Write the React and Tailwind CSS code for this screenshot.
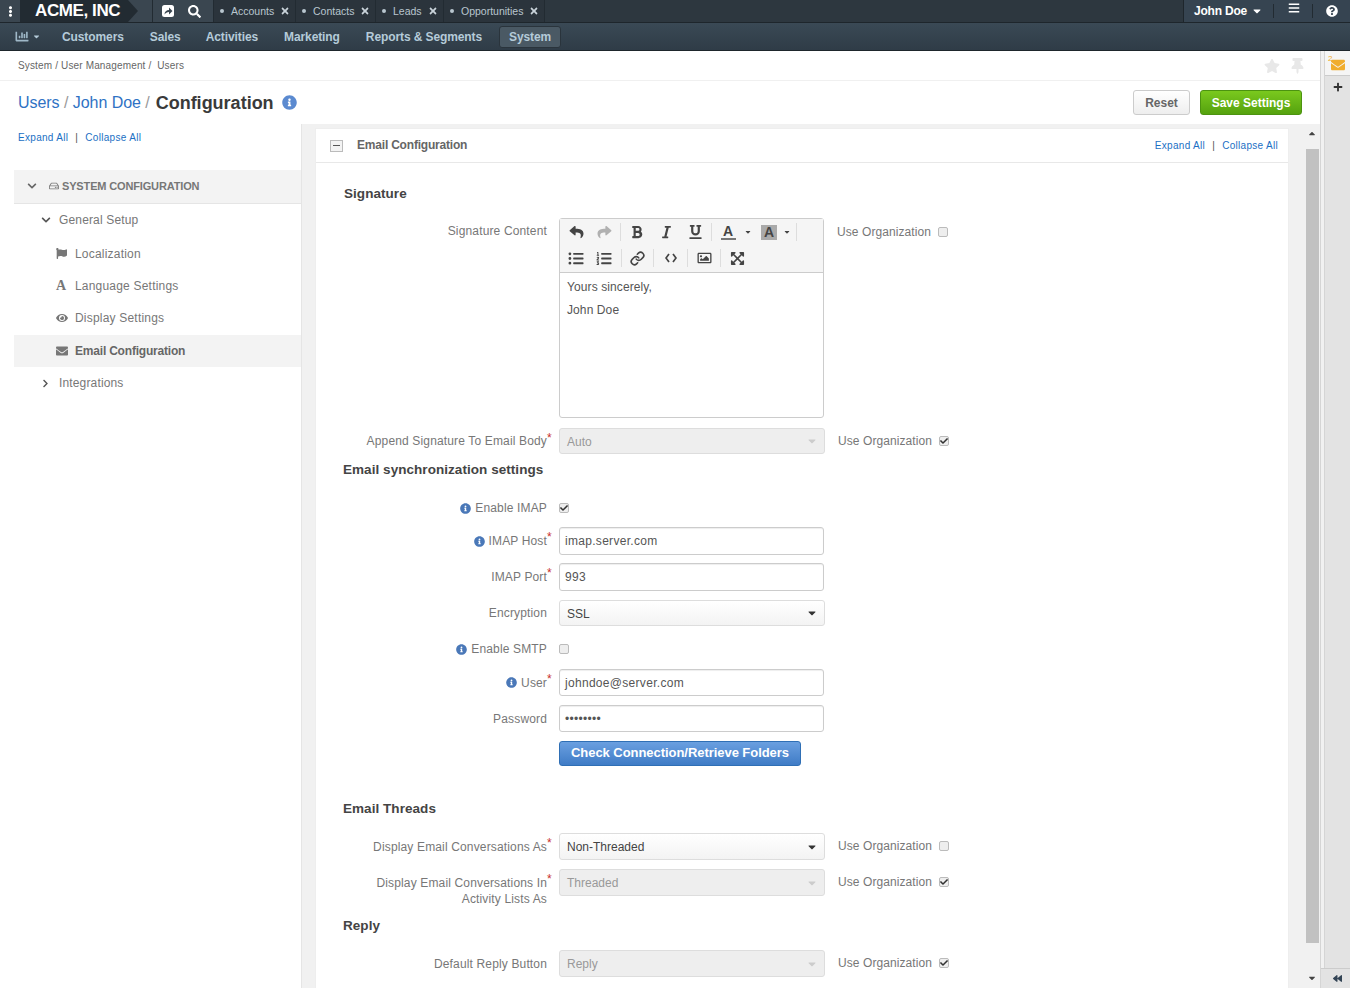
import React from 'react';
import {
  FaBackward, FaBold, FaCaretDown, FaChartBar, FaCheck, FaChevronDown, FaChevronRight, FaEllipsisV,
  FaEnvelope, FaExpandArrowsAlt, FaEye, FaFlag, FaInfoCircle, FaItalic, FaListOl,
  FaListUl, FaPlus, FaQuestionCircle, FaRegHdd, FaRegImage, FaReply, FaSearch, FaShare, FaStar, FaThumbtack,
  FaTimes, FaUnderline, FaBars,
} from 'react-icons/fa';
import { Link } from 'lucide-react';

const tabs = [
  { name: 'Accounts', w: 'w-[82px]' },
  { name: 'Contacts', w: 'w-[80px]' },
  { name: 'Leads', w: 'w-[68px]' },
  { name: 'Opportunities', w: 'w-[101px]' },
];

const menu = [
  { name: 'Customers', ml: 'ml-[21px]' },
  { name: 'Sales', ml: 'ml-[26px]' },
  { name: 'Activities', ml: 'ml-[25px]' },
  { name: 'Marketing', ml: 'ml-[26px]' },
  { name: 'Reports & Segments', ml: 'ml-[26px]' },
];

const Check = ({ checked }) => (
  <span className="w-[10px] h-[10px] shrink-0 flex items-center justify-center rounded-[2px] border border-[#bbb] bg-[#eee]">
    {checked && <FaCheck className="w-[8px] h-[8px] text-[#333]" />}
  </span>
);

const UseOrg = ({ checked, ml = 'ml-[13px]' }) => (
  <div className={`flex items-center h-[26px] ${ml} text-[#777] tracking-[0.08px]`}>
    <span>Use Organization</span>
    <span className="ml-[7px]"><Check checked={checked} /></span>
  </div>
);

const Label = ({ children, req, info, top = 'items-center' }) => (
  <div className={`w-[236px] shrink-0 flex justify-end ${top} text-[#777] tracking-[0.15px]`}>
    {info && <FaInfoCircle className="w-[11px] h-[11px] mr-[4px] text-[#4a78b8]" />}
    <span className="text-right">{children}</span>
    <span className="w-[5px] self-start text-[#c9302c] leading-[20px]">{req ? '*' : ''}</span>
  </div>
);

const Input = ({ value, h = 'h-[28px]' }) => (
  <div className={`ml-[7px] w-[265px] ${h} flex items-center px-[5px] rounded-[3px] border border-[#ccc] bg-white text-[#555] tracking-[0.3px] shadow-[inset_0_1px_1px_rgba(0,0,0,0.07)]`}>
    {value}
  </div>
);

const Select = ({ value, disabled }) => (
  <div className={`ml-[7px] w-[266px] h-full flex items-center justify-between pl-[7px] pr-[6px] rounded-[3px] border border-[#ddd] ${disabled ? 'bg-[#eee] text-[#999]' : 'bg-gradient-to-b from-white to-[#f3f3f3] text-[#444]'}`}>
    <span className="pt-[1px]">{value}</span>
    <FaCaretDown className={`w-[12px] h-[12px] ${disabled ? 'text-[#ccc]' : 'text-[#333]'}`} />
  </div>
);

const Heading = ({ children, mt }) => (
  <h3 className={`${mt} h-[20px] pl-[27px] text-[13.5px] leading-[22px] font-bold text-[#444] tracking-[0.05px]`}>{children}</h3>
);

const Sep = ({ ml = '' }) => <span className={`${ml} w-[1px] h-[18px] bg-[#ddd] shrink-0`} />;

const Cell = ({ w, children }) => <span className={`${w} h-[18px] shrink-0 flex items-center justify-center`}>{children}</span>;

const TreeItem = ({ icon, children, active, h = 'h-[32px]', extra = '' }) => (
  <div className={`${h} ${extra} flex items-center pl-[42px] ${active ? 'bg-[#f3f3f3] font-bold text-[#666] tracking-[-0.2px]' : 'pt-[2px] text-[#777] tracking-[0.2px]'}`}>
    <span className="w-[19px] flex">{icon}</span>
    {children}
  </div>
);

export default function App() {
  return (
    <div className="h-[988px] w-[1350px] overflow-hidden bg-white text-[12px] leading-[16px] font-['Liberation_Sans',Arial,sans-serif]">
      {/* top bar */}
      <div className="h-[23px] flex items-stretch bg-[#2d373f] border-b border-[#1e262c]">
        <div className="w-[20px] flex items-center justify-center bg-[#3a4650] text-white">
          <FaEllipsisV className="w-[11px] h-[11px]" />
        </div>
        <div className="relative z-10 w-[108px] flex items-center pl-[15px] bg-[#222b32] text-white text-[17px] font-bold tracking-[-0.4px]">
          ACME, INC
          <span className="absolute left-[108px] top-0 w-0 h-0 border-y-[11px] border-y-transparent border-l-[10px] border-l-[#222b32]" />
        </div>
        <div className="w-[86px] flex items-center bg-[#3a4650] border-r border-[#222b32] text-white">
          <span className="ml-[24px] h-full border-l border-[#222b32]" />
          <svg className="ml-[8px] w-[14px] h-[14px]" viewBox="0 0 14 14">
            <rect x="1" y="1" width="12" height="12" rx="2.5" fill="#fff" />
            <path d="M3.5 10.5C3.5 7.5 5.5 6 8 6V3.5L11.5 7 8 10.5V8C6 8 4.5 9 3.5 10.5Z" fill="#3a4650" />
          </svg>
          <FaSearch className="ml-[13px] w-[13px] h-[13px]" />
        </div>
        {tabs.map((t) => (
          <div key={t.name} className={`${t.w} flex items-center pl-[6px] border-r border-[#222b32] bg-[#2b343c] text-[#b9c6cf] text-[10.5px]`}>
            <span className="w-[4px] h-[4px] rounded-full bg-[#b9c6cf] mr-[7px]" />
            {t.name}
            <FaTimes className="ml-[6px] w-[10px] h-[10px] text-[#c9d3da]" />
          </div>
        ))}
        <div className="ml-auto w-[167px] flex items-center border-l border-[#1e262c] bg-[#364451] text-white">
          <span className="ml-[10px] font-bold tracking-[-0.2px]">John Doe</span>
          <FaCaretDown className="ml-[4px] w-[12px] h-[12px]" />
          <span className="ml-[10px] h-[14px] border-l border-[#222b32]" />
          <FaBars className="ml-[14px] mb-[6px] w-[12px] h-[12px]" />
          <span className="ml-[12px] h-[14px] border-l border-[#222b32]" />
          <FaQuestionCircle className="ml-[13px] w-[12px] h-[12px]" />
        </div>
      </div>

      {/* main nav */}
      <div className="h-[28px] flex items-center bg-gradient-to-b from-[#3a4955] to-[#2f3c47] border-b border-[#1e262c] text-[#b5cbd9] font-bold tracking-[-0.1px]">
        <FaChartBar className="ml-[15px] w-[14px] h-[13px] text-[#9fb8c8]" />
        <FaCaretDown className="ml-[3px] w-[9px] h-[9px]" />
        {menu.map((m) => (
          <span key={m.name} className={m.ml}>{m.name}</span>
        ))}
        <span className="ml-[17px] w-[62px] h-[22px] flex items-center justify-center rounded-[3px] bg-[#4a5964] border border-[#2a343c]">System</span>
      </div>

      <div className="flex h-[937px]">
        <div className="w-[1321px] flex flex-col border-r border-[#d5d5d5]">
          {/* breadcrumb */}
          <div className="h-[30px] shrink-0 flex items-center justify-between pl-[18px] pr-[16px] border-b border-[#f0f0f0] text-[10px] text-[#666] tracking-[0.15px]">
            <span className="pt-[1px]">System / User Management / &nbsp;Users</span>
            <span className="flex items-center text-[#e8e8e8]">
              <FaStar className="w-[16px] h-[16px]" />
              <FaThumbtack className="ml-[11px] w-[13px] h-[16px]" />
            </span>
          </div>
          {/* title row */}
          <div className="h-[43px] shrink-0 flex items-center pl-[18px] pr-[18px]">
            <span className="text-[16px] text-[#2f72c4] tracking-[-0.05px]">Users <span className="text-[#999]">/</span> John Doe <span className="text-[#999]">/</span></span>
            <span className="ml-[6px] text-[18px] font-bold text-[#3a3a3a]">Configuration</span>
            <FaInfoCircle className="ml-[8px] w-[15px] h-[15px] text-[#5b8ad0]" />
            <button className="ml-auto w-[57px] h-[25px] rounded-[3px] border border-[#ccc] bg-gradient-to-b from-white to-[#eee] font-bold text-[#666]">Reset</button>
            <button className="ml-[10px] w-[102px] h-[25px] rounded-[3px] border border-[#4c9310] bg-gradient-to-b from-[#7ac91e] to-[#55a20e] font-bold text-white">Save Settings</button>
          </div>

          <div className="flex-1 flex min-h-0 bg-[#f1f1f1]">
            {/* left tree */}
            <div className="w-[302px] shrink-0 bg-white border-r border-[#e5e5e5]">
              <div className="h-[46px] pt-[6px] pl-[18px] text-[10px] text-[#1a6fc4] tracking-[0.3px]">
                Expand All <span className="mx-[4px] text-[#555]">|</span> Collapse All
              </div>
              <div className="ml-[14px]">
                <div className="h-[34px] flex items-center pl-[13px] pb-[2px] bg-[#f3f3f3] border-b border-[#e5e5e5] font-bold text-[11px] text-[#777] tracking-[-0.15px]">
                  <FaChevronDown className="w-[10px] h-[10px] text-[#666]" />
                  <FaRegHdd className="ml-[12px] mr-[3px] w-[10px] h-[10px] text-[#777]" />
                  SYSTEM CONFIGURATION
                </div>
                <div className="h-[32px] flex items-center pl-[27px] text-[#777] tracking-[0.15px]">
                  <FaChevronDown className="w-[10px] h-[10px] text-[#555] mr-[8px]" />
                  General Setup
                </div>
                <TreeItem h="h-[33px]" icon={<FaFlag className="w-[11px] h-[11px] text-[#777]" />}>Localization</TreeItem>
                <TreeItem icon={<span className="text-[14px] leading-[14px] font-bold text-[#777] font-['Liberation_Serif',serif]">A</span>}>Language Settings</TreeItem>
                <TreeItem extra="mb-[2px]" icon={<FaEye className="w-[12px] h-[12px] text-[#777]" />}>Display Settings</TreeItem>
                <TreeItem active icon={<FaEnvelope className="w-[12px] h-[12px] text-[#777]" />}>Email Configuration</TreeItem>
                <div className="h-[32px] flex items-center pl-[27px] text-[#777] tracking-[0.15px]">
                  <FaChevronRight className="w-[9px] h-[9px] text-[#555] mr-[9px]" />
                  Integrations
                </div>
              </div>
            </div>

            {/* panel */}
            <div className="w-[975px] ml-[13px] mt-[4px] bg-white border border-[#eee] border-b-0">
              <div className="h-[34px] flex items-center pl-[14px] pr-[10px] border-b border-[#e8e8e8]">
                <span className="w-[13px] h-[12px] flex items-center justify-center border border-[#bbb] bg-[#f3f3f3]">
                  <span className="w-[7px] h-[1px] bg-[#555]" />
                </span>
                <span className="ml-[14px] pb-[2px] font-bold text-[#666] tracking-[-0.2px]">Email Configuration</span>
                <span className="ml-auto text-[10px] text-[#1a6fc4] tracking-[0.3px]">
                  Expand All <span className="mx-[4px] text-[#555]">|</span> Collapse All
                </span>
              </div>

              <Heading mt="mt-[20px]"><span className="ml-[1px]">Signature</span></Heading>

              <div className="mt-[15px] flex items-start">
                <Label top="items-start"><span className="block mt-[5px]">Signature Content</span></Label>
                <div className="ml-[7px] w-[265px] h-[200px] rounded-[3px] border border-[#ccc]">
                  <div className="h-[54px] px-[2px] pt-[3px] bg-[#f5f5f5] border-b border-[#ccc] text-[#444]">
                    <div className="h-[20px] flex items-center">
                      <Cell w="w-[28px]"><FaReply className="w-[15px] h-[14px]" /></Cell>
                      <Cell w="w-[28px]"><FaShare className="w-[15px] h-[14px] text-[#b0b0b0]" /></Cell>
                      <Sep ml="ml-[2px]" />
                      <Cell w="w-[32px]"><FaBold className="w-[12px] h-[14px]" /></Cell>
                      <Cell w="w-[26px]"><FaItalic className="w-[11px] h-[14px]" /></Cell>
                      <Cell w="w-[32px]"><FaUnderline className="w-[13px] h-[14px]" /></Cell>
                      <Sep />
                      <Cell w="w-[32px]"><span className="w-[15px] h-[15px] flex items-center justify-center border-b-2 border-[#777] font-bold text-[14px]">A</span></Cell>
                      <FaCaretDown className="w-[8px] h-[8px]" />
                      <span className="ml-[9px] w-[16px] h-[15px] flex items-center justify-center bg-[#aaa] font-bold text-[14px]">A</span>
                      <FaCaretDown className="ml-[6px] w-[8px] h-[8px]" />
                      <Sep ml="ml-[5px]" />
                    </div>
                    <div className="mt-[6px] h-[20px] flex items-center">
                      <Cell w="w-[28px]"><FaListUl className="w-[16px] h-[15px]" /></Cell>
                      <Cell w="w-[28px]"><FaListOl className="w-[16px] h-[15px]" /></Cell>
                      <Sep ml="ml-[3px]" />
                      <Cell w="w-[31px]"><Link className="w-[15px] h-[15px]" strokeWidth={2.6} /></Cell>
                      <Sep />
                      <Cell w="w-[33px]">
                        <svg className="w-[12px] h-[10px]" viewBox="0 0 12 10" fill="none" stroke="currentColor" strokeWidth="1.7">
                          <path d="M4 1 1 5l3 4M8 1l3 4-3 4" />
                        </svg>
                      </Cell>
                      <Sep />
                      <Cell w="w-[32px]"><FaRegImage className="w-[15px] h-[14px]" /></Cell>
                      <Sep />
                      <Cell w="w-[32px]"><FaExpandArrowsAlt className="w-[15px] h-[15px]" /></Cell>
                    </div>
                  </div>
                  <div className="pt-[6px] pl-[7px] text-[#555] tracking-[0.1px]">
                    <p className="h-[23px]">Yours sincerely,</p>
                    <p>John Doe</p>
                  </div>
                </div>
                <div className="pt-[1px]"><UseOrg /></div>
              </div>

              <div className="mt-[10px] h-[26px] flex">
                <Label req><span className="block pb-[1px]">Append Signature To Email Body</span></Label>
                <Select value="Auto" disabled />
                <UseOrg checked />
              </div>

              <Heading mt="mt-[5px]">Email synchronization settings</Heading>

              <div className="mt-[19px] h-[20px] flex items-center">
                <Label info>Enable IMAP</Label>
                <span className="ml-[7px]"><Check checked /></span>
              </div>
              <div className="mt-[9px] h-[28px] flex">
                <Label info req>IMAP Host</Label>
                <Input value="imap.server.com" />
              </div>
              <div className="mt-[8px] h-[28px] flex">
                <Label req>IMAP Port</Label>
                <Input value="993" />
              </div>
              <div className="mt-[9px] h-[26px] flex">
                <Label>Encryption</Label>
                <Select value="SSL" />
              </div>
              <div className="mt-[13px] h-[20px] flex items-center">
                <Label info>Enable SMTP</Label>
                <span className="ml-[7px]"><Check /></span>
              </div>
              <div className="mt-[10px] h-[27px] flex">
                <Label info req>User</Label>
                <Input value="johndoe@server.com" h="h-[27px]" />
              </div>
              <div className="mt-[9px] h-[27px] flex">
                <Label>Password</Label>
                <Input value="••••••••" h="h-[27px]" />
              </div>
              <div className="mt-[9px] h-[25px] flex">
                <div className="w-[236px] shrink-0" />
                <button className="ml-[7px] w-[242px] h-[25px] pb-[2px] rounded-[3px] border border-[#2f6fb5] bg-gradient-to-b from-[#6a9fe0] to-[#3f7cc6] font-bold text-[13px] tracking-[-0.05px] text-white">
                  Check Connection/Retrieve Folders
                </button>
              </div>

              <Heading mt="mt-[32px]">Email Threads</Heading>

              <div className="mt-[15px] h-[27px] flex">
                <Label req>Display Email Conversations As</Label>
                <Select value="Non-Threaded" />
                <UseOrg />
              </div>
              <div className="mt-[9px] h-[27px] flex">
                <Label req top="items-start">
                  <span className="block mt-[6px]">Display Email Conversations In<br />Activity Lists As</span>
                </Label>
                <Select value="Threaded" disabled />
                <UseOrg checked />
              </div>

              <Heading mt="mt-[19px]">Reply</Heading>

              <div className="mt-[15px] h-[27px] flex">
                <Label>Default Reply Button</Label>
                <Select value="Reply" disabled />
                <UseOrg checked />
              </div>
            </div>

            {/* page scrollbar */}
            <div className="w-[16px] ml-[15px] flex flex-col items-center bg-[#f1f1f1]">
              <FaCaretDown className="mt-[5px] w-[10px] h-[10px] rotate-180 text-[#444]" />
              <div className="mt-[10px] w-[13px] h-[794px] bg-[#c1c1c1]" />
              <FaCaretDown className="mt-auto mb-[5px] w-[10px] h-[10px] text-[#444]" />
            </div>
          </div>
        </div>

        {/* right rail */}
        <div className="w-[29px] flex flex-col bg-[#e3e3e3]">
          <div className="flex-1 flex min-h-0">
            <div className="w-[4px] bg-[#f1f1f1] border-r border-[#d5d5d5]" />
            <div className="flex-1 flex flex-col">
              <div className="relative h-[25px] flex items-center justify-center bg-[#f5f5f5] border-b border-[#ccc]">
                <FaEnvelope className="w-[16px] h-[14px] mt-[3px] text-[#f0ad2e]" />
                <span className="absolute left-[3px] top-[4px] text-[8px] leading-[8px] text-[#f0ad2e]">2</span>
              </div>
              <div className="h-[22px] flex items-center justify-center">
                <FaPlus className="w-[10px] h-[10px] text-[#333]" />
              </div>
            </div>
          </div>
          <div className="h-[20px] pl-[4px] flex items-center justify-center border-t border-[#ccc]">
            <FaBackward className="w-[9px] h-[9px] text-[#345]" />
          </div>
        </div>
      </div>
    </div>
  );
}
